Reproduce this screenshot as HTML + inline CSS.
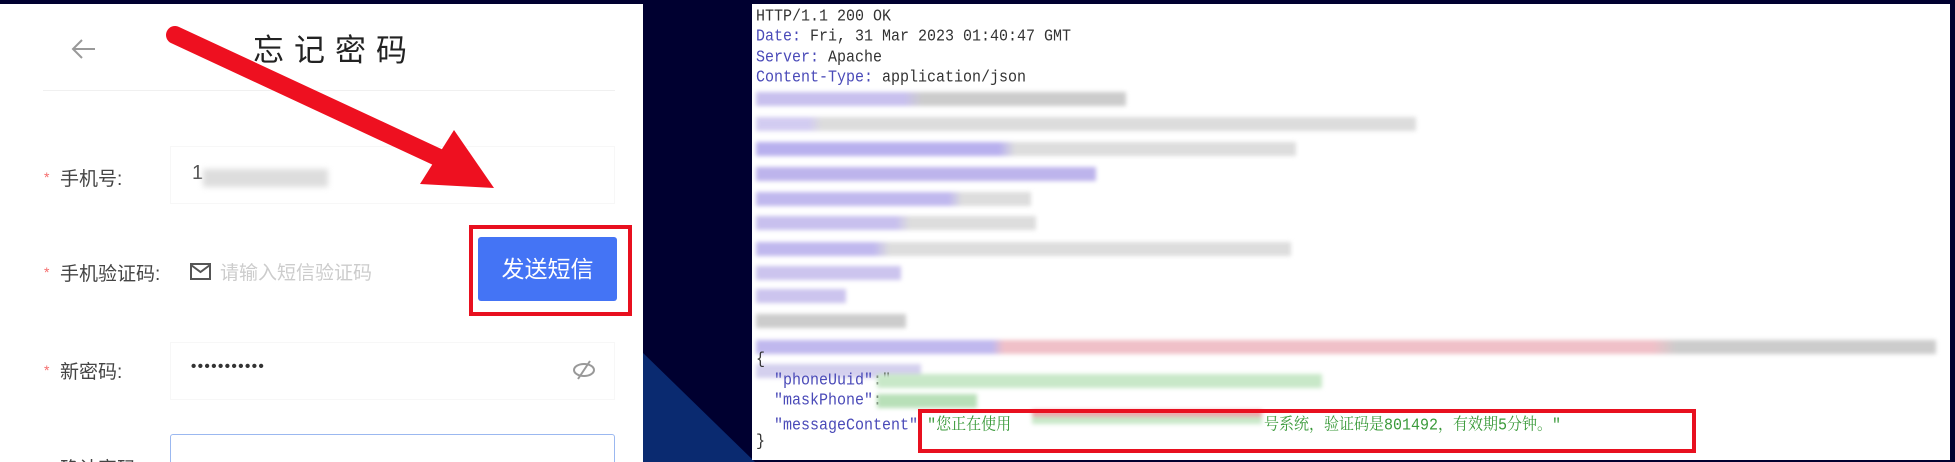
<!DOCTYPE html>
<html><head><meta charset="utf-8"><style>
*{margin:0;padding:0;box-sizing:border-box}
html,body{width:1955px;height:462px;overflow:hidden}
body{background:#000030;position:relative;font-family:"Liberation Sans","Noto Sans CJK SC",sans-serif}
.abs{position:absolute}
#left{left:0;top:4px;width:643px;height:458px;background:#fff;overflow:hidden}
#right{left:752px;top:4px;width:1198px;height:456px;background:#fff;overflow:hidden}
.lbl{position:absolute;left:60px;font-size:19px;color:#444}
.star{position:absolute;left:44px;color:#f56c6c;font-size:14px}
.mono{font-family:"Liberation Mono","Noto Serif CJK SC",monospace;font-size:15px;position:absolute;left:4px;white-space:pre;color:#333;transform:scaleY(1.1)}
.k{color:#4a4ab8}
.bl{position:absolute;height:14px;filter:blur(2px)}
</style></head><body>
<svg class="abs" style="left:640px;top:0" width="115" height="462"><polygon points="0,350 115,462 0,462" fill="#0a2a70"/></svg>
<div id="left" class="abs">
 <svg class="abs" style="left:70px;top:34px" width="28" height="22"><path d="M25 11H3M12 2L3 11L12 20" stroke="#999" stroke-width="2" fill="none"/></svg>
 <div class="abs" style="left:253px;top:21px;font-size:31px;color:#222;letter-spacing:10px">忘记密码</div>
 <div class="abs" style="left:43px;top:86px;width:572px;height:1px;background:#f0f0f0"></div>
 <div class="star" style="top:165px">*</div><div class="lbl" style="top:160px">手机号:</div>
 <div class="abs" style="left:170px;top:142px;width:445px;height:58px;border:1px solid #f7f7f7"></div>
 <div class="abs" style="left:192px;top:158px;font-size:20px;color:#555">1</div>
 <div class="abs" style="left:203px;top:165px;width:125px;height:18px;background:#ddd;filter:blur(3px)"></div>
 <div class="star" style="top:260px">*</div><div class="lbl" style="top:255px">手机验证码:</div>
 <svg class="abs" style="left:189px;top:258px" width="24" height="20"><rect x="2" y="2" width="19" height="15" fill="none" stroke="#555" stroke-width="2"/><path d="M2 3L11.5 10L21 3" stroke="#555" stroke-width="2" fill="none"/></svg>
 <div class="abs" style="left:220px;top:254px;font-size:19px;color:#ccc">请输入短信验证码</div>
 <div class="abs" style="left:469px;top:221px;width:163px;height:91px;border:4px solid #e8101f"></div>
 <div class="abs" style="left:478px;top:233px;width:139px;height:64px;background:#4474f5;border-radius:3px;color:#fff;font-size:23px;text-align:center;line-height:64px">发送短信</div>
 <div class="star" style="top:358px">*</div><div class="lbl" style="top:353px">新密码:</div>
 <div class="abs" style="left:170px;top:338px;width:445px;height:58px;border:1px solid #f7f7f7"></div>
 <div class="abs" style="left:191px;top:354px;font-size:15px;color:#333;letter-spacing:1.5px;font-weight:bold">•••••••••••</div>
 <svg class="abs" style="left:570px;top:354px" width="28" height="24"><ellipse cx="14" cy="12" rx="10" ry="6" fill="none" stroke="#999" stroke-width="2"/><path d="M8 21L20 3" stroke="#999" stroke-width="2"/></svg>
 <div class="abs" style="left:170px;top:430px;width:445px;height:40px;border:1px solid #9bb8f0;border-radius:3px"></div>
 <div class="lbl" style="top:450px">确认密码:</div>
 <svg class="abs" style="left:0;top:-4px" width="643" height="462"><line x1="175" y1="35" x2="448" y2="162" stroke="#ee1020" stroke-width="18" stroke-linecap="round"/><polygon points="454,130 494,188 420,184" fill="#ee1020"/></svg>
</div>
<div id="right" class="abs">
 <div class="mono" style="top:4px">HTTP/1.1 200 OK</div>
 <div class="mono" style="top:24px"><span class="k">Date:</span> Fri, 31 Mar 2023 01:40:47 GMT</div>
 <div class="mono" style="top:45px"><span class="k">Server:</span> Apache</div>
 <div class="mono" style="top:65px"><span class="k">Content-Type:</span> application/json</div>
 <div class="bl" style="left:4px;top:88px;width:370px;background:linear-gradient(90deg,#c8c0ee 0 40%,#ccc 45% 100%)"></div>
 <div class="bl" style="left:4px;top:113px;width:660px;background:linear-gradient(90deg,#c8c0ee 0 8%,#d4d4d4 10% 100%);opacity:.8"></div>
 <div class="bl" style="left:4px;top:138px;width:540px;background:linear-gradient(90deg,#b8b0ee 0 45%,#ddd 48% 100%)"></div>
 <div class="bl" style="left:4px;top:163px;width:340px;background:#bdb4ec"></div>
 <div class="bl" style="left:4px;top:188px;width:275px;background:linear-gradient(90deg,#c0b8ee 0 70%,#ddd 75%)"></div>
 <div class="bl" style="left:4px;top:212px;width:280px;background:linear-gradient(90deg,#c8c0ee 0 50%,#ddd 55%)"></div>
 <div class="bl" style="left:4px;top:238px;width:535px;background:linear-gradient(90deg,#c0b8ee 0 22%,#ddd 25%)"></div>
 <div class="bl" style="left:4px;top:262px;width:145px;background:#ccc4ee"></div>
 <div class="bl" style="left:4px;top:285px;width:90px;background:#ccc4ee"></div>
 <div class="bl" style="left:4px;top:310px;width:150px;background:#ccc"></div>
 <div class="bl" style="left:4px;top:336px;width:1180px;background:linear-gradient(90deg,#c0b8ee 0 20%,#f0c0c8 21% 76%,#ccc 78% 100%)"></div>
 <div class="bl" style="left:4px;top:360px;width:165px;background:#d4d0ee"></div>
 <div class="mono" style="top:347px">{</div>
 <div class="mono" style="top:368px">  <span class="k">"phoneUuid"</span>:"</div>
 <div class="bl" style="left:125px;top:370px;width:445px;background:#c8e8c8"></div>
 <div class="mono" style="top:388px">  <span class="k">"maskPhone"</span>:</div>
 <div class="bl" style="left:125px;top:390px;width:100px;background:#b8e0b8"></div>
 <div class="mono" style="top:409px">  <span class="k">"messageContent"</span> <span style="color:#3a9a3a">"您正在使用</span></div>
 <div class="bl" style="left:280px;top:406px;width:230px;background:linear-gradient(180deg,#f0a0a8 0 40%,#c8e8c8 50%)"></div>
 <div class="mono" style="top:409px;left:512px;color:#3a9a3a">号系统，验证码是801492，有效期5分钟。"</div>
 <div class="mono" style="top:429px">}</div>
 <div class="abs" style="left:166px;top:405px;width:778px;height:44px;border:4px solid #e8101f"></div>
</div>
</body></html>
